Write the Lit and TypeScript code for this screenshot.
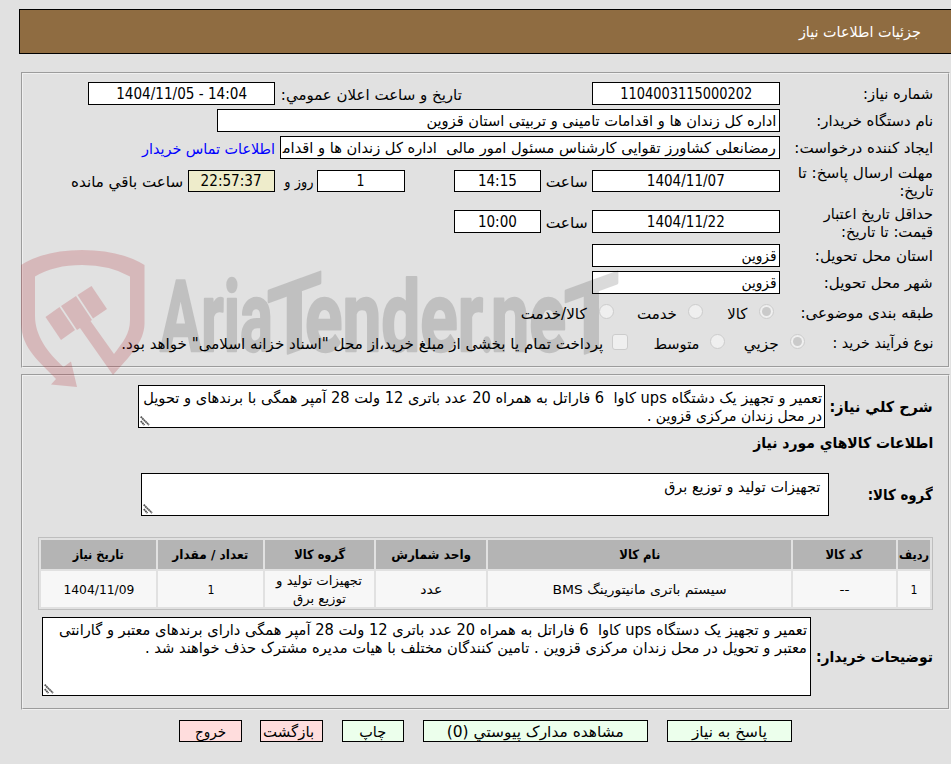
import { LitElement, html, css, svg } from "lit";
import { customElement, property } from "lit/decorators.js";

/** One line of text, condensed or widened horizontally to an exact width. */
@customElement("fit-text")
class FitText extends LitElement {
  @property({ type: Number }) w = 0;
  @property({ type: Number }) dy = 0;
  @property() text = "";
  static styles = css`
    :host { display: block; flex: none; direction: rtl; text-align: start; white-space: pre; line-height: 18px; height: 18px; }
    .ink { display: inline-block; transform-origin: 100% 0; vertical-align: top; }
  `;
  render() {
    return html`<span class="ink">${this.text}</span>`;
  }
  updated() {
    const ink = this.renderRoot.querySelector(".ink") as HTMLElement;
    ink.style.transform = "none";
    this.style.width = `${this.w}px`;
    const natural = ink.getBoundingClientRect().width;
    ink.style.transform = `translateY(${this.dy}px) scaleX(${this.w / natural})`;
  }
}

const fit = (text: string, w: number, dy = 0) => html`<fit-text .text=${text} .w=${w} .dy=${dy}></fit-text>`;

interface Item {
  kind: "text" | "box" | "beige" | "link" | "radio" | "checked" | "check";
  gap: number;
  w: number;
  text?: string;
  tw?: number;
  start?: boolean;
}

interface Row {
  label: [string, number][];
  top: number;
  h: number;
  items: Item[];
}

// Gaps are measured from the previous item, starting at the end of the label column.
const rows: Row[] = [
  { label: [["شماره نیاز:", 70]], top: 8, h: 23, items: [
    { kind: "box", gap: 0, w: 188, text: "1104003115000202", tw: 132 },
    { kind: "text", gap: 130, w: 181, text: "تاریخ و ساعت اعلان عمومي:" },
    { kind: "box", gap: 6, w: 187, text: "14:04 - 1404/11/05", tw: 131 } ] },
  { label: [["نام دستگاه خریدار:", 117]], top: 4, h: 23, items: [
    { kind: "box", gap: 0, w: 563, text: "اداره کل زندان ها و اقدامات تامینی و تربیتی استان قزوین", tw: 350, start: true } ] },
  { label: [["ایجاد کننده درخواست:", 139]], top: 4, h: 23, items: [
    { kind: "box", gap: 0, w: 500, text: "رمضانعلی کشاورز تقوایی کارشناس مسئول امور مالی  اداره کل زندان ها و اقدام\u200d", tw: 493, start: true },
    { kind: "link", gap: 5, w: 133, text: "اطلاعات تماس خریدار" } ] },
  { label: [["مهلت ارسال پاسخ: تا", 135], ["تاریخ:", 34]], top: 11, h: 22, items: [
    { kind: "box", gap: 0, w: 188, text: "1404/11/07", tw: 78 },
    { kind: "text", gap: 4, w: 42, text: "ساعت" },
    { kind: "box", gap: 5, w: 87, text: "14:15", tw: 39 },
    { kind: "box", gap: 49, w: 88, text: "1", tw: 8 },
    { kind: "text", gap: 4, w: 29, text: "روز و" },
    { kind: "beige", gap: 9, w: 87, text: "22:57:37", tw: 61 },
    { kind: "text", gap: 5, w: 112, text: "ساعت باقي مانده" } ] },
  { label: [["حداقل تاریخ اعتبار", 109], ["قیمت: تا تاریخ:", 92]], top: 18, h: 23, items: [
    { kind: "box", gap: 0, w: 188, text: "1404/11/22", tw: 78 },
    { kind: "text", gap: 4, w: 42, text: "ساعت" },
    { kind: "box", gap: 5, w: 87, text: "10:00", tw: 39 } ] },
  { label: [["استان محل تحویل:", 118]], top: 11, h: 23, items: [
    { kind: "box", gap: 0, w: 188, text: "قزوین", tw: 35, start: true } ] },
  { label: [["شهر محل تحویل:", 109]], top: 4, h: 23, items: [
    { kind: "box", gap: 0, w: 188, text: "قزوین", tw: 35, start: true } ] },
  { label: [["طبقه بندی موضوعی:", 133]], top: 8, h: 22, items: [
    { kind: "checked", gap: 6, w: 15 },
    { kind: "text", gap: 12, w: 20, text: "کالا" },
    { kind: "radio", gap: 24, w: 15 },
    { kind: "text", gap: 11, w: 40, text: "خدمت" },
    { kind: "radio", gap: 23, w: 15 },
    { kind: "text", gap: 12, w: 66, text: "کالا/خدمت" } ] },
  { label: [["نوع فرآیند خرید :", 101]], top: 8, h: 22, items: [
    { kind: "checked", gap: -25, w: 15 },
    { kind: "text", gap: 11, w: 35, text: "جزیي" },
    { kind: "radio", gap: 19, w: 15 },
    { kind: "text", gap: 11, w: 46, text: "متوسط" },
    { kind: "check", gap: 25, w: 16 },
    { kind: "text", gap: 9, w: 482, text: "پرداخت تمام یا بخشی از مبلغ خرید،از محل \"اسناد خزانه اسلامی\" خواهد بود." } ] },
];

const columns: [string, number, [string, number][]][] = [
  ["ردیف", 30, [["1", 7]]],
  ["کد کالا", 37, [["--", 10]]],
  ["نام کالا", 41, [["سیستم باتری مانیتورینگ BMS", 174]]],
  ["واحد شمارش", 80, [["عدد", 22]]],
  ["گروه کالا", 51, [["تجهیزات تولید و", 86], ["توزیع برق", 53]]],
  ["تعداد / مقدار", 76, [["1", 7]]],
  ["تاریخ نیاز", 51, [["1404/11/09", 71]]],
];

const grip = html`<svg class="grip" width="10" height="10" viewBox="0 0 10 10">
  <path d="M.7 .7L9 9M.7 5.2L4.5 9" fill="none" stroke="#555" stroke-width="1.8" stroke-dasharray="1.8 .4" />
</svg>`;

const shield = svg`
  <g fill="rgb(180,43,52)" opacity=".22">
    <path d="M21 265Q45 250 82 250Q120 250 144.500 265V324C144 342 130 356 113 375L80 328L77 330L61 306L76 296L92 320L90.500 321L114 354C123 342 130 334 130 320V276.500Q110 265 82 265Q54 265 35 276.500V316C35 336 48 353 63.500 367L71 361.500L77 387L51 384.500L56 379C40 362 22 349 21 324Z" />
    <path d="M91.500 286L107 309L93 318.500L77.500 295Z" />
    <path d="M59.500 307L75 330L61 340L45.500 317Z" />
  </g>`;

@customElement("app-root")
class AppRoot extends LitElement {
  static styles = css`
    :host {
      display: block; position: relative; width: 951px; height: 764px; overflow: hidden;
      background: #e1e1e1; color: #000; direction: rtl; box-sizing: border-box; padding-top: 9px;
      font: 15px/18px "DejaVu Sans Condensed", "DejaVu Sans", sans-serif;
    }
    * { box-sizing: border-box; }
    .bar {
      height: 45px; margin-right: -1px; margin-left: 19px; border: 1px solid #000; background: #8f6c41;
      color: #fff; display: flex; align-items: center; padding-right: 30px;
    }
    .panel { margin: 18px 1px 0 21px; border: 2px groove #f0f0f0; height: 296px; }
    .panel.goods { margin-top: 6px; height: 336px; padding-right: 15px; }
    .row { display: flex; align-items: center; padding-right: 15px; }
    .label { width: 153px; flex: none; }
    .box, .beige {
      flex: none; height: 100%; border: 1px solid #000; background: #fff; overflow: hidden;
      display: flex; align-items: center; justify-content: center;
    }
    .start { justify-content: flex-start; padding-right: 3px; }
    .beige { background: #eeeccb; }
    .text, .link { flex: none; }
    .link { color: #00f; }
    .radio, .checked, .check {
      flex: none; height: 15px; border: 1px solid #ccc; border-radius: 50%; background: #efefef;
      display: flex; align-items: center; justify-content: center; margin-top: -3px;
    }
    .check { height: 16px; border-radius: 3px; }
    .checked::after { content: ""; width: 9px; height: 9px; border-radius: 50%; background: #cacaca; }
    .bold { font-weight: 700; }
    .line { display: flex; align-items: center; }
    .area { position: relative; flex: none; border: 1px solid #000; background: #fff; padding: 3px 2px 0 0; }
    .grip { position: absolute; left: 1px; bottom: 1px; }
    .desc { margin-top: 9px; height: 43px; }
    .desc .area { width: 687px; height: 43px; margin-right: 5px; }
    .heading { margin-top: 6px; height: 18px; }
    .group { margin-top: 21px; height: 43px; }
    .group .area { width: 688px; height: 43px; margin-right: 39px; padding: 4px 8px 0 0; }
    .table {
      display: grid; grid-template-columns: 32px 103px 303px 110px 109px 105px 115px;
      grid-template-rows: 29px 36px; gap: 2px; width: 895px; margin: 21px 0 0 0;
      border: 1px solid #bebebe; padding: 2px; font-size: 13px;
    }
    .head, .cell { display: flex; flex-direction: column; align-items: center; justify-content: center; background: #f7f7f7; }
    .head { background: #b4b4b4; font-weight: 700; }
    .note { margin-top: 7px; height: 79px; }
    .note .area { width: 769px; height: 79px; margin-right: 5px; padding-right: 3px; }
    .buttons { display: flex; gap: 19px; margin: 10px 159px 0 0; }
    .button {
      font: inherit; color: inherit; height: 22px; border: 1px solid #000; background: #ecffec; padding: 0;
      display: flex; align-items: center; justify-content: center;
    }
    .danger { background: #ffdddd; }
    .b1 { width: 125px; } .b2 { width: 225px; } .b3 { width: 62px; } .b4, .b5 { width: 63px; }
    .b4 { padding-right: 5px; }
    .b5 { margin-right: -1px; }
    .mark { position: absolute; left: 0; top: 0; direction: ltr; pointer-events: none; }
    .brand { font: 700 98px Roboto, sans-serif; stroke: #000; stroke-width: 2.5px; stroke-linejoin: round; }
  `;

  item(i: Item) {
    const isBox = i.kind === "box" || i.kind === "beige";
    return html`<div class="${i.kind} ${i.start ? "start" : ""}" style="width:${i.w}px;margin-right:${i.gap}px">
      ${i.text ? fit(i.text, isBox ? i.tw! : i.w, isBox ? 0 : 1) : ""}
    </div>`;
  }

  render() {
    return html`
      <div class="bar">${fit("جزئیات اطلاعات نیاز", 122)}</div>
      <div class="panel">
        ${rows.map((r) => html`<div class="row" style="height:${r.h}px;margin-top:${r.top}px">
          <div class="label">${r.label.map(([t, w]) => fit(t, w, r.label.length > 1 ? 1 : 0))}</div>
          ${r.items.map((i) => this.item(i))}
        </div>`)}
      </div>
      <div class="panel goods">
        <div class="line desc">
          <div class="bold">${fit("شرح کلي نیاز:", 103)}</div>
          <div class="area">
            ${fit("تعمیر و تجهیز یک دشتگاه ups کاوا  6 فاراتل به همراه 20 عدد باتری 12 ولت 28 آمپر همگی با برندهای و تحویل", 679)}
            ${fit("در محل زندان مرکزی قزوین .", 175)}
            ${grip}
          </div>
        </div>
        <div class="heading bold">${fit("اطلاعات کالاهاي مورد نیاز", 180)}</div>
        <div class="line group">
          <div class="bold">${fit("گروه کالا:", 65)}</div>
          <div class="area">${fit("تجهیزات تولید و توزیع برق", 156)}${grip}</div>
        </div>
        <div class="table">
          ${columns.map(([t, w]) => html`<div class="head">${fit(t, w)}</div>`)}
          ${columns.map(([, , lines]) => html`<div class="cell">${lines.map(([t, w]) => fit(t, w, 1))}</div>`)}
        </div>
        <div class="line note">
          <div class="bold">${fit("توضیحات خریدار:", 117)}</div>
          <div class="area">
            ${fit("تعمیر و تجهیز یک دستگاه ups کاوا  6 فاراتل به همراه 20 عدد باتری 12 ولت 28 آمپر همگی دارای برندهای معتبر و گارانتی", 748)}
            ${fit("معتبر و تحویل در محل زندان مرکزی قزوین . تامین کنندگان مختلف با هیات مدیره مشترک حذف خواهند شد .", 662)}
            ${grip}
          </div>
        </div>
      </div>
      <div class="buttons">
        <button class="button b1">${fit("پاسخ به نیاز", 75, 1)}</button>
        <button class="button b2">${fit("مشاهده مدارک پیوستي (0)", 177, 1)}</button>
        <button class="button b3">${fit("چاپ", 27, 1)}</button>
        <button class="button b4 danger">${fit("بازگشت", 51, 1)}</button>
        <button class="button b5 danger">${fit("خروج", 31, 1)}</button>
      </div>
      <svg class="mark" width="951" height="764" viewBox="0 0 951 764">
        ${shield}
        <g class="brand" opacity=".14">
          <text x="160" y="351" textLength="113" lengthAdjust="spacingAndGlyphs">Aria</text>
          <text transform="translate(267 361) skewY(-20)" textLength="55" lengthAdjust="spacingAndGlyphs">T</text>
          <text x="305" y="351" textLength="178" lengthAdjust="spacingAndGlyphs">ender</text>
          <text x="480" y="351" textLength="14" lengthAdjust="spacingAndGlyphs">.</text>
          <text x="491" y="351" textLength="75" lengthAdjust="spacingAndGlyphs">ne</text>
          <text transform="translate(564 361) skewY(-20)" textLength="55" lengthAdjust="spacingAndGlyphs">T</text>
        </g>
      </svg>`;
  }
}
